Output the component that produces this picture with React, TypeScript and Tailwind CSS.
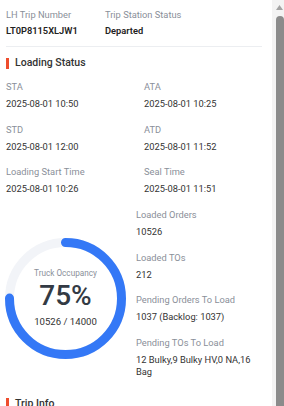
type Field = { label: string; value: string };

const timeFields: Field[] = [
  { label: "STA", value: "2025-08-01 10:50" },
  { label: "ATA", value: "2025-08-01 10:25" },
  { label: "STD", value: "2025-08-01 12:00" },
  { label: "ATD", value: "2025-08-01 11:52" },
  { label: "Loading Start Time", value: "2025-08-01 10:26" },
  { label: "Seal Time", value: "2025-08-01 11:51" },
];

const loadFields: Field[] = [
  { label: "Loaded Orders", value: "10526" },
  { label: "Loaded TOs", value: "212" },
  { label: "Pending Orders To Load", value: "1037 (Backlog: 1037)" },
  { label: "Pending TOs To Load", value: "12 Bulky,9 Bulky HV,0 NA,16 Bag" },
];

function InfoItem({ label, value }: Field) {
  return (
    <div>
      <p className="text-[9.3px] leading-[16px] text-[#8a8f99]">{label}</p>
      <p className="mt-[3px] text-[9.3px] leading-[12px] text-[#333]">{value}</p>
    </div>
  );
}

function SectionTitle({ title }: { title: string }) {
  return (
    <div className="flex items-center gap-[6px]">
      <span className="h-[11px] w-[3px] bg-[#ee4d2d]" />
      <h2 className="text-[10.5px] font-medium leading-[16px] text-[#333]">
        {title}
      </h2>
    </div>
  );
}

function OccupancyRing({ percent }: { percent: number }) {
  const r = 56;
  const c = 2 * Math.PI * r;

  return (
    <div className="relative h-[121px] w-[121px] shrink-0">
      <svg width="121" height="121" viewBox="0 0 121 121">
        <circle cx="60.5" cy="60.5" r={r} fill="none" stroke="#f2f4f8" strokeWidth="9" />
        <circle
          cx="60.5"
          cy="60.5"
          r={r}
          fill="none"
          stroke="#3478f6"
          strokeWidth="9"
          strokeLinecap="round"
          strokeDasharray={`${(c * percent) / 100} ${c}`}
          transform="rotate(-90 60.5 60.5)"
        />
      </svg>
      <div className="absolute inset-0 flex flex-col items-center pt-[29px]">
        <p className="text-[8.2px] leading-[12px] text-[#8a8f99]">Truck Occupancy</p>
        <p className="text-[28px] font-medium leading-[34px] text-[#333a44]">
          {percent}%
        </p>
        <p className="mt-[2px] text-[9.6px] leading-[14px] text-[#333]">10526 / 14000</p>
      </div>
    </div>
  );
}

function Scrollbar() {
  return (
    <div className="flex h-full w-[12px] shrink-0 flex-col bg-[#f3f3f3]">
      <div className="flex h-[14px] items-center justify-end pr-[1px]">
        <svg width="7" height="5" viewBox="0 0 7 5">
          <path d="M3.5 0L7 5H0z" fill="#a3a3a3" />
        </svg>
      </div>
      <div className="ml-[4px] mt-[2px] flex-1 rounded-t-[4px] bg-[#8b8b8b]" />
    </div>
  );
}

export default function App() {
  return (
    <div className="flex h-[406px] w-[284px] overflow-hidden bg-white font-['Roboto',sans-serif]">
      <div className="w-[272px] shrink-0 pl-[6px] pr-[10px] pt-[7px]">
        {/* Trip header */}
        <div className="flex border-b border-[#eceef1] pb-[7px]">
          <div className="w-[99px]">
            <p className="text-[9.3px] leading-[16px] text-[#8a8f99]">LH Trip Number</p>
            <p className="text-[9.3px] font-semibold leading-[16px] text-[#222]">
              LT0P8115XLJW1
            </p>
          </div>
          <div>
            <p className="text-[9.3px] leading-[16px] text-[#8a8f99]">Trip Station Status</p>
            <p className="text-[9.3px] font-semibold leading-[16px] text-[#222]">Departed</p>
          </div>
        </div>

        {/* Loading status */}
        <div className="mt-[8px]">
          <SectionTitle title="Loading Status" />
          <div className="mt-[8px] grid grid-cols-2 gap-x-[20px] gap-y-[11.5px]">
            {timeFields.map((f) => (
              <InfoItem key={f.label} label={f.label} value={f.value} />
            ))}
          </div>

          <div className="mt-[12px] flex gap-[10px]">
            <div className="-ml-[1px] pt-[31px]">
              <OccupancyRing percent={75} />
            </div>
            <div className="flex w-[118px] flex-col gap-y-[11.5px]">
              {loadFields.map((f) => (
                <InfoItem key={f.label} label={f.label} value={f.value} />
              ))}
            </div>
          </div>
        </div>

        {/* Trip info */}
        <div className="mt-[18px]">
          <SectionTitle title="Trip Info" />
        </div>
      </div>
      <Scrollbar />
    </div>
  );
}
